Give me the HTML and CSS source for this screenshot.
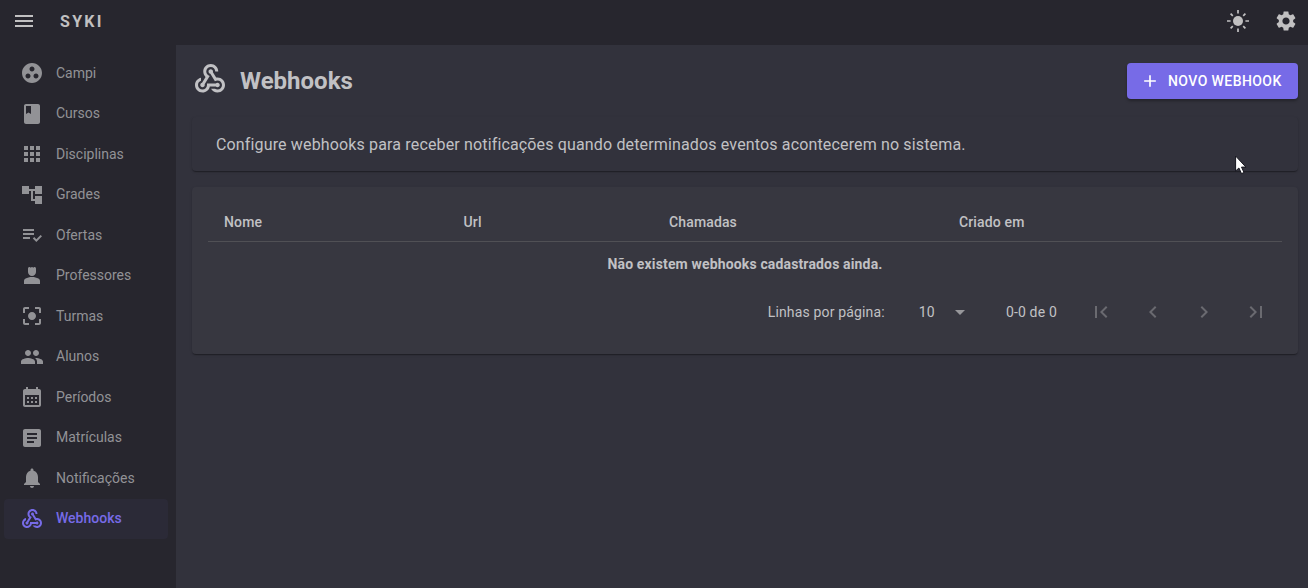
FILE: index.html
```html
<!DOCTYPE html>
<html lang="pt-BR">
<head>
<meta charset="utf-8">
<title>Syki - Webhooks</title>
<link rel="stylesheet" href="styles.css">
</head>
<body>
<svg class="defs" width="0" height="0">
  <symbol id="webhook" viewBox="0 0 24 24"><path d="M10 15h5.88c.27-.31.67-.5 1.12-.5.83 0 1.5.67 1.5 1.5s-.67 1.5-1.5 1.5c-.44 0-.84-.19-1.12-.5H11.9c-.46 2.28-2.48 4-4.9 4-2.76 0-5-2.24-5-5 0-2.42 1.72-4.44 4-4.9v2.07c-1.16.41-2 1.53-2 2.83 0 1.65 1.35 3 3 3s3-1.35 3-3v-1zm2.5-11c1.65 0 3 1.35 3 3h2c0-2.76-2.24-5-5-5s-5 2.24-5 5c0 1.43.6 2.71 1.55 3.62l-2.35 3.9c-.68.14-1.2.75-1.2 1.48 0 .83.67 1.5 1.5 1.5s1.5-.67 1.5-1.5c0-.16-.02-.31-.07-.45l3.38-5.63C10.49 9.61 9.5 8.42 9.5 7c0-1.65 1.35-3 3-3zm4.5 9c-.64 0-1.23.2-1.72.54l-3.05-5.07C11.53 8.35 11 7.74 11 7c0-.83.67-1.5 1.5-1.5S14 6.17 14 7c0 .15-.02.29-.06.43l2.19 3.65c.28-.05.57-.08.87-.08 2.76 0 5 2.24 5 5s-2.24 5-5 5c-1.85 0-3.47-1.01-4.33-2.5h2.67c.48.32 1.05.5 1.66.5 1.65 0 3-1.35 3-3s-1.35-3-3-3z"/></symbol>
</svg>
<header class="appbar">
  <svg class="icon" viewBox="0 0 24 24"><path d="M3 18h18v-2H3v2zm0-5h18v-2H3v2zm0-7v2h18V6H3z"/></svg>
  <span class="brand">SYKI</span>
  <svg class="icon" viewBox="0 0 24 24"><circle cx="12" cy="12" r="5"/><path class="rays" d="M12 1v3.6M12 19.4V23M1 12h3.6M19.4 12H23M4.6 4.6l2.2 2.2M17.2 17.2l2.2 2.2M4.6 19.4l2.2-2.2M17.2 6.8l2.2-2.2"/></svg>
  <svg class="icon gear" viewBox="0 0 24 24"><path d="M19.14 12.94c.04-.3.06-.61.06-.94 0-.32-.02-.64-.07-.94l2.03-1.58c.18-.14.23-.41.12-.61l-1.92-3.32c-.12-.22-.37-.29-.59-.22l-2.39.96c-.5-.38-1.03-.7-1.62-.94l-.36-2.54c-.04-.24-.24-.41-.48-.41h-3.84c-.24 0-.43.17-.47.41l-.36 2.54c-.59.24-1.13.57-1.62.94l-2.39-.96c-.22-.08-.47 0-.59.22L2.74 8.87c-.12.21-.08.47.12.61l2.03 1.58c-.05.3-.09.63-.09.94s.02.64.07.94l-2.03 1.58c-.18.14-.23.41-.12.61l1.92 3.32c.12.22.37.29.59.22l2.39-.96c.5.38 1.03.7 1.62.94l.36 2.54c.05.24.24.41.48.41h3.84c.24 0 .44-.17.47-.41l.36-2.54c.59-.24 1.13-.56 1.62-.94l2.39.96c.22.08.47 0 .59-.22l1.92-3.32c.12-.22.07-.47-.12-.61l-2.01-1.58zM12 15.6c-1.98 0-3.6-1.62-3.6-3.6s1.62-3.6 3.6-3.6 3.6 1.62 3.6 3.6-1.62 3.6-3.6 3.6z"/></svg>
</header>
<div class="layout">
<nav class="drawer">
  <a class="link"><svg class="icon" viewBox="0 0 24 24"><path d="M12 2C6.48 2 2 6.48 2 12s4.48 10 10 10 10-4.48 10-10S17.52 2 12 2zM8 17.5c-1.38 0-2.5-1.12-2.5-2.5s1.12-2.5 2.5-2.5 2.5 1.12 2.5 2.5-1.12 2.5-2.5 2.5zM9.5 8c0-1.38 1.12-2.5 2.5-2.5s2.5 1.12 2.5 2.5-1.12 2.5-2.5 2.5S9.5 9.38 9.5 8zm6.5 9.5c-1.38 0-2.5-1.12-2.5-2.5s1.12-2.5 2.5-2.5 2.5 1.12 2.5 2.5-1.12 2.5-2.5 2.5z"/></svg><span class="label">Campi</span></a>
  <a class="link"><svg class="icon" viewBox="0 0 24 24"><path d="M18 2H6c-1.1 0-2 .9-2 2v16c0 1.1.9 2 2 2h12c1.1 0 2-.9 2-2V4c0-1.1-.9-2-2-2zM6 4h5v8l-2.5-1.5L6 12V4z"/></svg><span class="label">Cursos</span></a>
  <a class="link"><svg class="icon" viewBox="0 0 24 24"><path d="M4 8h4V4H4v4zm6 12h4v-4h-4v4zm-6 0h4v-4H4v4zm0-6h4v-4H4v4zm6 0h4v-4h-4v4zm6-10v4h4V4h-4zm-6 4h4V4h-4v4zm6 6h4v-4h-4v4zm0 6h4v-4h-4v4z"/></svg><span class="label">Disciplinas</span></a>
  <a class="link"><svg class="icon" viewBox="0 0 24 24"><path d="M22 11V3h-7v3H9V3H2v8h7V8h2v10h4v3h7v-8h-7v3h-2V8h2v3z"/></svg><span class="label">Grades</span></a>
  <a class="link"><svg class="icon" viewBox="0 0 24 24"><path d="M3 10h11v2H3zM3 6h11v2H3zM3 14h7v2H3zM20.59 11.93l-4.25 4.24-2.12-2.12-1.41 1.41L16.34 19 22 13.34z"/></svg><span class="label">Ofertas</span></a>
  <a class="link"><svg class="icon" viewBox="0 0 24 24"><path d="M18.39 14.56C16.71 13.7 14.53 13 12 13s-4.71.7-6.39 1.56C4.61 15.07 4 16.1 4 17.22V20h16v-2.78c0-1.12-.61-2.15-1.61-2.66zM12 12c2.21 0 4-1.79 4-4V4.5c0-.83-.67-1.5-1.5-1.5-.52 0-.98.27-1.25.67-.27-.4-.73-.67-1.25-.67s-.98.27-1.25.67C10.48 3.27 10.02 3 9.5 3 8.67 3 8 3.67 8 4.5V8c0 2.21 1.79 4 4 4z"/></svg><span class="label">Professores</span></a>
  <a class="link"><svg class="icon" viewBox="0 0 24 24"><path d="M12 8c-2.21 0-4 1.79-4 4s1.79 4 4 4 4-1.79 4-4-1.79-4-4-4zm-7 7H3v4c0 1.1.9 2 2 2h4v-2H5v-4zM5 5h4V3H5c-1.1 0-2 .9-2 2v4h2V5zm14-2h-4v2h4v4h2V5c0-1.1-.9-2-2-2zm0 16h-4v2h4c1.1 0 2-.9 2-2v-4h-2v4z"/></svg><span class="label">Turmas</span></a>
  <a class="link"><svg class="icon" viewBox="0 0 24 24"><path d="M16 11c1.66 0 2.99-1.34 2.99-3S17.66 5 16 5c-1.66 0-3 1.34-3 3s1.34 3 3 3zm-8 0c1.66 0 2.99-1.34 2.99-3S9.66 5 8 5C6.34 5 5 6.34 5 8s1.34 3 3 3zm0 2c-2.33 0-7 1.17-7 3.5V19h14v-2.5c0-2.33-4.67-3.5-7-3.5zm8 0c-.29 0-.62.02-.97.05 1.16.84 1.97 1.97 1.97 3.45V19h6v-2.5c0-2.33-4.67-3.5-7-3.5z"/></svg><span class="label">Alunos</span></a>
  <a class="link"><svg class="icon" viewBox="0 0 24 24"><path d="M19 4h-1V2h-2v2H8V2H6v2H5c-1.11 0-1.99.9-1.99 2L3 20c0 1.1.89 2 2 2h14c1.1 0 2-.9 2-2V6c0-1.1-.9-2-2-2zm0 16H5V10h14v10zM9 14H7v-2h2v2zm4 0h-2v-2h2v2zm4 0h-2v-2h2v2zm-8 4H7v-2h2v2zm4 0h-2v-2h2v2zm4 0h-2v-2h2v2z"/></svg><span class="label">Períodos</span></a>
  <a class="link"><svg class="icon" viewBox="0 0 24 24"><path d="M19 3H5c-1.1 0-2 .9-2 2v14c0 1.1.9 2 2 2h14c1.1 0 2-.9 2-2V5c0-1.1-.9-2-2-2zm-5 14H7v-2h7v2zm3-4H7v-2h10v2zm0-4H7V7h10v2z"/></svg><span class="label">Matrículas</span></a>
  <a class="link"><svg class="icon" viewBox="0 0 24 24"><path d="M12 22c1.1 0 2-.9 2-2h-4c0 1.1.89 2 2 2zm6-6v-5c0-3.07-1.64-5.64-4.5-6.32V4c0-.83-.67-1.5-1.5-1.5s-1.5.67-1.5 1.5v.68C7.63 5.36 6 7.92 6 11v5l-2 2v1h16v-1l-2-2z"/></svg><span class="label">Notificações</span></a>
  <a class="link active"><svg class="icon"><use href="#webhook"/></svg><span class="label">Webhooks</span></a>
</nav>
<main class="main">
  <div class="heading">
    <svg class="title-icon"><use href="#webhook"/></svg>
    <h1 class="title">Webhooks</h1>
    <button class="button"><svg class="plus" viewBox="0 0 24 24"><path d="M19 13h-6v6h-2v-6H5v-2h6V5h2v6h6v2z"/></svg>NOVO WEBHOOK</button>
  </div>
  <section class="paper info">Configure webhooks para receber notificações quando determinados eventos acontecerem no sistema.</section>
  <section class="paper table">
    <div class="row head"><span>Nome</span><span>Url</span><span>Chamadas</span><span>Criado em</span></div>
    <div class="empty">Não existem webhooks cadastrados ainda.</div>
    <div class="pager">
      <span class="per-page">Linhas por página:</span>
      <span class="size">10</span>
      <svg class="icon caret" viewBox="0 0 24 24"><path d="M7 10l5 5 5-5z"/></svg>
      <span class="range">0-0 de 0</span>
      <div class="pages">
        <svg class="icon" viewBox="0 0 24 24"><path d="M18.41 16.59L13.82 12l4.59-4.59L17 6l-6 6 6 6zM6 6h2v12H6z"/></svg>
        <svg class="icon" viewBox="0 0 24 24"><path d="M15.41 7.41L14 6l-6 6 6 6 1.41-1.41L10.83 12z"/></svg>
        <svg class="icon" viewBox="0 0 24 24"><path d="M10 6L8.59 7.41 13.17 12l-4.58 4.59L10 18l6-6z"/></svg>
        <svg class="icon" viewBox="0 0 24 24"><path d="M5.59 7.41L10.18 12l-4.59 4.59L7 18l6-6-6-6zM16 6h2v12h-2z"/></svg>
      </div>
    </div>
  </section>
</main>
</div>
<svg class="cursor" width="12" height="20" viewBox="0 0 12 20"><path d="M.6 1v15l3.3-3 2.6 5.6 2.5-1.1-2.5-5.4h4.4z"/></svg>
</body>
</html>
```
FILE: styles.css
```css
* { box-sizing: border-box; }
body { margin: 0; height: 588px; overflow: hidden; display: flex; flex-direction: column; background: #32323c; color: #c1c1c4; font-family: Roboto, sans-serif; font-size: 14px; }
.defs { position: absolute; }
.icon { width: 24px; height: 24px; fill: currentColor; flex: none; }
.appbar { height: 45px; flex: none; display: flex; align-items: center; padding: 0 10px 3px 12px; background: #27262e; color: #c1c0c1; }
.brand { flex: 1; margin-left: 24px; font-size: 16px; font-weight: 700; letter-spacing: 2.3px; }
.rays { stroke: currentColor; stroke-width: 1.7; }
.gear { margin-left: 24px; }
.layout { flex: 1; display: flex; min-height: 0; }
.drawer { width: 176px; background: #27262e; padding: 8px 8px 0 4px; }
.link { height: 40.5px; display: flex; align-items: center; gap: 12px; padding-left: 16px; color: #929296; border-radius: 4px; }
.label { padding-bottom: .6px; }
.active { height: 40px; background: #2b2a37; color: #776be7; font-weight: 500; }
.main { flex: 1; padding: 18px 10px 0 16px; }
.heading { display: flex; align-items: center; height: 36px; margin-bottom: 18px; }
.title-icon { width: 36px; height: 36px; fill: currentColor; margin-top: -4px; }
.title { flex: 1; margin: 0 0 0 12px; font-size: 24px; font-weight: 700; line-height: 32px; }
.button { display: flex; align-items: center; gap: 8px; height: 36px; width: 171px; padding: 0 16px 0 13px; border: 0; border-radius: 4px; background: #776be7; color: #fff; font: 500 14px Roboto, sans-serif; letter-spacing: .42px; white-space: nowrap; box-shadow: 0 2px 3px rgba(0,0,0,.3); }
.plus { width: 20px; height: 20px; flex: none; fill: currentColor; }
.paper { border-radius: 4px; box-shadow: 0 2px 1px -1px rgba(0,0,0,.2), 0 1px 1px rgba(0,0,0,.14), 0 1px 3px rgba(0,0,0,.12); }
.info { height: 54px; padding: 0 24px; font-size: 16px; line-height: 56px; letter-spacing: .15px; background: #32323c; }
.table { height: 167px; margin-top: 16px; padding: 16px; background: #373740; }
.row { display: grid; grid-template-columns: 239.5px 205.5px 290px 1fr; height: 39px; padding-left: 16px; line-height: 38px; border-bottom: 1px solid #505055; }
.head { font-weight: 500; letter-spacing: .14px; }
.empty { height: 45px; line-height: 45px; text-align: center; font-weight: 700; letter-spacing: .15px; }
.pager { display: flex; align-items: center; justify-content: flex-end; height: 50px; padding-right: 14px; letter-spacing: .16px; }
.size { margin-left: 34px; }
.caret { margin-left: 13px; color: #97979b; }
.range { margin-left: 34px; }
.pages { display: flex; gap: 27.7px; margin-left: 32px; color: #6a6a70; }
.cursor { position: absolute; left: 1235px; top: 155px; fill: #fff; stroke: #17171f; stroke-width: 1; }
```
